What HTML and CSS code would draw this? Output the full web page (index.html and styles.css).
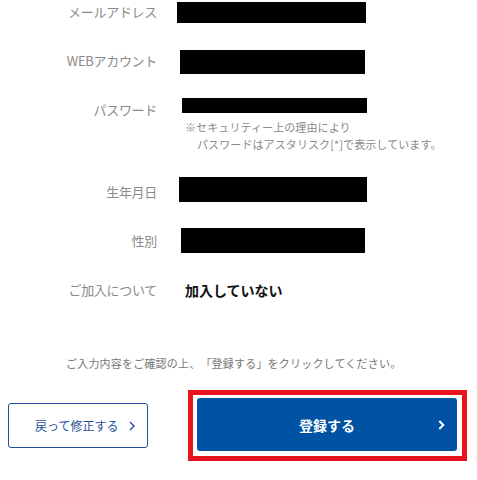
FILE: index.html
```html
<!DOCTYPE html>
<html lang="ja">
<head>
<meta charset="utf-8">
<title>確認</title>
<link rel="stylesheet" href="styles.css">
</head>
<body>
<main class="confirm">
  <dl class="fields">
    <div class="row">
      <dt class="label">メールアドレス</dt>
      <dd class="value"><span class="mask mask-mail"></span></dd>
    </div>
    <div class="row">
      <dt class="label">WEBアカウント</dt>
      <dd class="value"><span class="mask mask-web"></span></dd>
    </div>
    <div class="row row-pass">
      <dt class="label">パスワード</dt>
      <dd class="value">
        <span class="mask mask-pass"></span>
        <p class="note">※セキュリティー上の理由により<br>パスワードはアスタリスク[*]で表示しています。</p>
      </dd>
    </div>
    <div class="row">
      <dt class="label">生年月日</dt>
      <dd class="value"><span class="mask mask-birth"></span></dd>
    </div>
    <div class="row">
      <dt class="label">性別</dt>
      <dd class="value"><span class="mask mask-sex"></span></dd>
    </div>
    <div class="row">
      <dt class="label">ご加入について</dt>
      <dd class="value"><span class="answer">加入していない</span></dd>
    </div>
  </dl>

  <p class="instruction">ご入力内容をご確認の上、「登録する」をクリックしてください。</p>

  <div class="actions">
    <a class="btn-back" href="#">
      <span>戻って修正する</span>
      <svg class="chev" width="6" height="10" viewBox="0 0 6 10"><path d="M1 1 L5 5 L1 9" fill="none" stroke="#1f4f98" stroke-width="1.4"/></svg>
    </a>
    <div class="highlight">
      <a class="btn-submit" href="#">
        <span class="submit-label">登録する</span>
        <svg class="chev-white" width="7" height="10" viewBox="0 0 7 10"><path d="M1.3 1 L5.3 5 L1.3 9" fill="none" stroke="#ffffff" stroke-width="2"/></svg>
      </a>
    </div>
  </div>
</main>
</body>
</html>
```

FILE: styles.css
```css
html, body {
  margin: 0;
  padding: 0;
  background: #ffffff;
}

body {
  font-family: "Noto Sans CJK JP", "Noto Sans", sans-serif;
  color: #222;
  width: 477px;
  height: 480px;
  overflow: hidden;
  text-spacing-trim: space-all;
}

.confirm {
  display: flex;
  flex-direction: column;
}

.fields {
  margin: 0;
  display: flex;
  flex-direction: column;
}

.row {
  display: grid;
  grid-template-columns: 157px 1fr;
  column-gap: 20px;
  height: 49px;
  align-items: start;
}

.row-pass {
  height: 82px;
}

.label {
  margin: 0;
  text-align: right;
  font-size: 13px;
  line-height: 23px;
  color: #8a8a8a;
  letter-spacing: -0.3px;
}

.value {
  margin: 0;
  display: flex;
  flex-direction: column;
  align-items: flex-start;
}

.mask {
  display: block;
  background: #000;
}

.mask-mail  { margin: 2px 0 0 0;  width: 189px; height: 21px; }
.mask-web   { margin: 1px 0 0 3px; width: 185px; height: 24px; }
.mask-pass  { margin: 0 0 0 5px;  width: 185px; height: 15px; }
.mask-birth { margin: -3px 0 0 2px; width: 188px; height: 25px; }
.mask-sex   { margin: -1px 0 0 4px; width: 184px; height: 25px; }

.note {
  margin: 6px 0 0 8px;
  font-size: 11px;
  line-height: 17px;
  color: #8a8a8a;
  padding-left: 12px;
  text-indent: -12px;
  letter-spacing: 0.1px;
}

.answer {
  margin-left: 8px;
  font-size: 14px;
  line-height: 25px;
  font-weight: 700;
  color: #111;
}

.instruction {
  margin: 28px 0 0 0;
  padding-left: 66px;
  font-size: 11px;
  line-height: 17px;
  color: #777;
  letter-spacing: 0.2px;
}

.actions {
  margin-top: 18px;
  display: flex;
  align-items: center;
}

.btn-back {
  box-sizing: border-box;
  margin-left: 8px;
  width: 140px;
  height: 45px;
  border: 1px solid #1f4f98;
  border-radius: 3px;
  display: flex;
  align-items: center;
  padding-left: 26px;
  gap: 11px;
  font-size: 12px;
  color: #1f4f98;
  text-decoration: none;
}

.chev {
  display: block;
}

.highlight {
  box-sizing: border-box;
  margin-left: 40px;
  width: 279px;
  height: 71px;
  border: 5px solid #e8131c;
  padding: 3px 5px 5px 4px;
}

.btn-submit {
  box-sizing: border-box;
  width: 260px;
  height: 53px;
  background: #0052a4;
  border-radius: 3px;
  display: grid;
  grid-template-columns: 1fr auto 1fr;
  align-items: center;
  color: #fff;
  text-decoration: none;
  padding-right: 12px;
  padding-left: 12px;
}

.submit-label {
  grid-column: 2;
  font-size: 14px;
  font-weight: 700;
}

.chev-white {
  grid-column: 3;
  justify-self: end;
  display: block;
}
```
